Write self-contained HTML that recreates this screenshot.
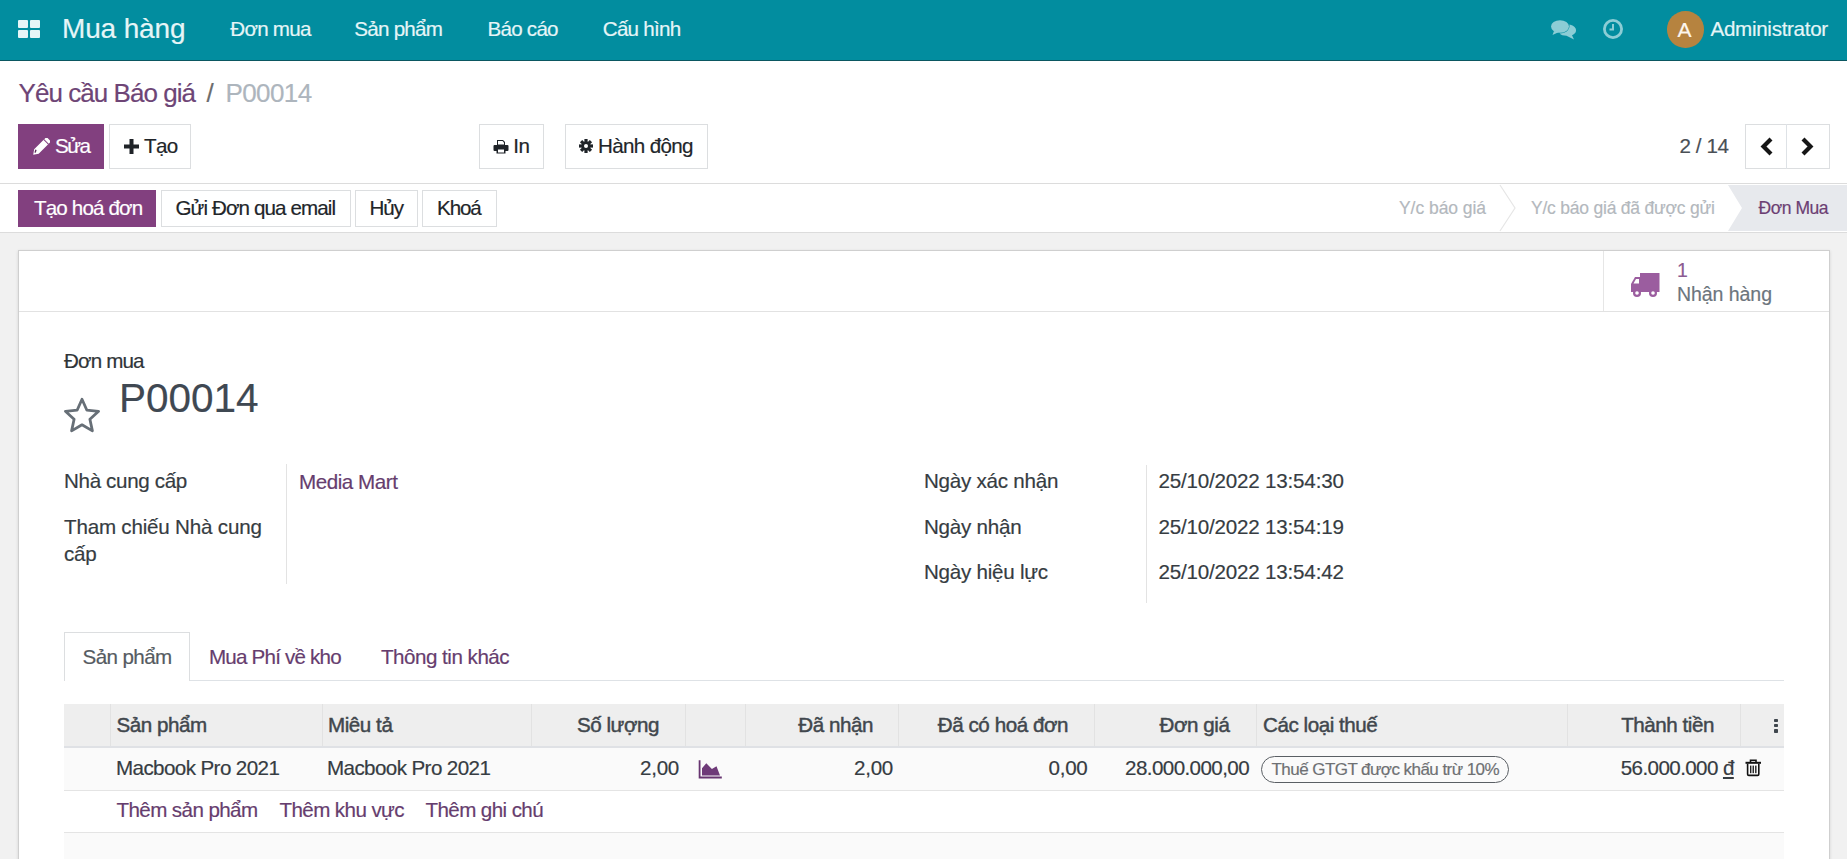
<!DOCTYPE html><html><head><meta charset="utf-8"><style>
html,body{margin:0;padding:0;}
body{width:1847px;height:859px;overflow:hidden;position:relative;background:#f1f1f1;font-family:"Liberation Sans",sans-serif;}
.t{position:absolute;white-space:nowrap;-webkit-text-stroke:0.18px currentColor;}
.r{position:absolute;box-sizing:border-box;}
svg{position:absolute;}
</style></head><body>
<div class="r" style="left:0px;top:233px;width:1847px;height:626px;background:#f1f1f1;"></div>
<div class="r" style="left:0px;top:0px;width:1847px;height:61px;background:#028d9f;"></div>
<div class="r" style="left:0px;top:60px;width:1847px;height:1px;background:#0b5761;"></div>
<div class="r" style="left:18px;top:19.5px;width:10px;height:8.4px;background:#e6f5f7;border-radius:1px"></div>
<div class="r" style="left:30px;top:19.5px;width:10px;height:8.4px;background:#e6f5f7;border-radius:1px"></div>
<div class="r" style="left:18px;top:29.8px;width:10px;height:8.4px;background:#e6f5f7;border-radius:1px"></div>
<div class="r" style="left:30px;top:29.8px;width:10px;height:8.4px;background:#e6f5f7;border-radius:1px"></div>
<div class="t" style="top:15.30px;font-size:28px;line-height:28px;color:#e6f5f7;letter-spacing:-0.15px;left:62.00px;">Mua hàng</div>
<div class="t" style="top:19.01px;font-size:20.6px;line-height:20.6px;color:#e6f5f7;letter-spacing:-0.7500000000000002px;left:230.30px;">Đơn mua</div>
<div class="t" style="top:19.01px;font-size:20.6px;line-height:20.6px;color:#e6f5f7;letter-spacing:-0.7500000000000002px;left:354.30px;">Sản phẩm</div>
<div class="t" style="top:19.01px;font-size:20.6px;line-height:20.6px;color:#e6f5f7;letter-spacing:-0.7500000000000002px;left:487.50px;">Báo cáo</div>
<div class="t" style="top:19.01px;font-size:20.6px;line-height:20.6px;color:#e6f5f7;letter-spacing:-0.7500000000000002px;left:602.80px;">Cấu hình</div>
<svg style="left:1551px;top:19px" width="26" height="22" viewBox="0 0 26 22">
<ellipse cx="9" cy="7.5" rx="9" ry="6.3" fill="#8ccdd5"/>
<path d="M3 12 L1.5 16 L8 13 Z" fill="#8ccdd5"/>
<path d="M18.5 5.5 C23 6.5 25.5 9 25 12 C24.7 14 23 15.5 21 16.3 L23 20.5 L15.5 16.8 C12.5 16.8 10 15.8 8.6 14.5 C14 14.5 18.5 11.5 18.5 7 Z" fill="#8ccdd5"/>
</svg>
<svg style="left:1602px;top:18px" width="22" height="22" viewBox="0 0 22 22">
<circle cx="11" cy="11" r="8.6" fill="none" stroke="#8ccdd5" stroke-width="2.8"/>
<path d="M11 6 V11.5 H7.5" fill="none" stroke="#8ccdd5" stroke-width="2"/>
</svg>
<div class="r" style="left:1667px;top:11px;width:36.5px;height:36.5px;border-radius:50%;background:#b6833f"></div>
<div class="t" style="top:18.72px;font-size:21px;line-height:21px;color:#fdf6ee;letter-spacing:-0.5px;left:1677.50px;">A</div>
<div class="t" style="top:19.01px;font-size:20.6px;line-height:20.6px;color:#e6f5f7;letter-spacing:-0.30000000000000027px;left:1710.50px;">Administrator</div>
<div class="r" style="left:0px;top:61px;width:1847px;height:122px;background:#ffffff;"></div>
<div class="r" style="left:0px;top:183px;width:1847px;height:1px;background:#dcdcdc;"></div>
<div class="t" style="top:80.19px;font-size:26px;line-height:26px;color:#6e4576;letter-spacing:-0.95px;left:18.50px;">Yêu cầu Báo giá</div>
<div class="t" style="top:80.19px;font-size:26px;line-height:26px;color:#6c6c6c;left:206.50px;">/</div>
<div class="t" style="top:80.19px;font-size:26px;line-height:26px;color:#adb5bd;letter-spacing:-0.6px;left:225.50px;">P00014</div>
<div class="r" style="left:18px;top:124px;width:86px;height:45px;background:#82407f;"></div>
<div class="t" style="top:136.41px;font-size:20.6px;line-height:20.6px;color:#ffffff;letter-spacing:-1.5000000000000002px;left:55.00px;">Sửa</div>
<svg style="left:32px;top:138px" width="18" height="18" viewBox="0 0 18 18">
<g transform="translate(9 9) rotate(45)">
<path d="M-3.2 -9.5 Q-3.2 -11 -1.7 -11 H1.7 Q3.2 -11 3.2 -9.5 V6.5 L0 11 L-3.2 6.5 Z" fill="#ffffff"/>
<rect x="-3.5" y="-7.8" width="7" height="1" fill="#82407f"/>
<path d="M-1.6 5.5 L-0.2 8.2" stroke="#5a2c58" stroke-width="1.4"/>
</g>
</svg>
<div class="r" style="left:109px;top:124px;width:82px;height:45px;background:#fff;border:1px solid #dcdee0"></div>
<svg style="left:123px;top:138px" width="17" height="17" viewBox="0 0 17 17">
<path d="M6.5 1 H10.5 V6.5 H16 V10.5 H10.5 V16 H6.5 V10.5 H1 V6.5 H6.5 Z" fill="#1f2328"/>
</svg>
<div class="t" style="top:136.41px;font-size:20.6px;line-height:20.6px;color:#212529;letter-spacing:-0.7000000000000003px;left:144.00px;">Tạo</div>
<div class="r" style="left:479px;top:124px;width:65px;height:45px;background:#fff;border:1px solid #dcdee0"></div>
<svg style="left:493px;top:139px" width="16" height="15" viewBox="0 0 16 15">
<path d="M4 1 H10 L12 3 V6 H4 Z" fill="#1f2328"/>
<path d="M5 2 H9.5 L11 3.5 V5.5 H5 Z" fill="#fff"/>
<rect x="0.5" y="6" width="15" height="6" rx="1" fill="#1f2328"/>
<rect x="3.5" y="9.5" width="9" height="5" fill="#1f2328"/>
<rect x="5" y="10.5" width="6" height="3" fill="#fff"/>
</svg>
<div class="t" style="top:136.41px;font-size:20.6px;line-height:20.6px;color:#212529;letter-spacing:-0.30000000000000027px;left:513.20px;">In</div>
<div class="r" style="left:565px;top:124px;width:143px;height:45px;background:#fff;border:1px solid #dcdee0"></div>
<svg style="left:579px;top:139px" width="14" height="14" viewBox="0 0 14 14">
<g fill="#1f2328" transform="translate(7 7)">
<circle r="4.6"/>
<rect x="-1.6" y="-7" width="3.2" height="14"/>
<rect x="-1.6" y="-7" width="3.2" height="14" transform="rotate(45)"/>
<rect x="-1.6" y="-7" width="3.2" height="14" transform="rotate(90)"/>
<rect x="-1.6" y="-7" width="3.2" height="14" transform="rotate(135)"/>
</g><circle cx="7" cy="7" r="2" fill="#fff"/>
</svg>
<div class="t" style="top:136.41px;font-size:20.6px;line-height:20.6px;color:#212529;letter-spacing:-0.6500000000000002px;left:598.00px;">Hành động</div>
<div class="t" style="top:136.01px;font-size:20.6px;line-height:20.6px;color:#4a4f55;letter-spacing:-0.40000000000000024px;left:1679.50px;">2 / 14</div>
<div class="r" style="left:1745px;top:124px;width:85px;height:45px;background:#fff;border:1px solid #dcdee0"></div>
<div class="r" style="left:1786px;top:124px;width:1px;height:45px;background:#dee2e6;"></div>
<svg style="left:1759px;top:136.8px" width="16" height="20" viewBox="0 0 16 20">
<path d="M12 2 L4.5 9.5 L12 17" fill="none" stroke="#161616" stroke-width="4.2"/>
</svg>
<svg style="left:1799px;top:136.8px" width="16" height="20" viewBox="0 0 16 20">
<path d="M4 2 L11.5 9.5 L4 17" fill="none" stroke="#161616" stroke-width="4.2"/>
</svg>
<div class="r" style="left:0px;top:184px;width:1847px;height:48px;background:#ffffff;"></div>
<div class="r" style="left:0px;top:232px;width:1847px;height:1px;background:#dcdcdc;"></div>
<div class="r" style="left:18px;top:190px;width:138px;height:37px;background:#82407f;"></div>
<div class="t" style="top:197.71px;font-size:20.6px;line-height:20.6px;color:#ffffff;letter-spacing:-0.8500000000000003px;left:34.00px;">Tạo hoá đơn</div>
<div class="r" style="left:161px;top:190px;width:190px;height:37px;background:#fff;border:1px solid #dcdee0"></div>
<div class="t" style="top:197.71px;font-size:20.6px;line-height:20.6px;color:#212529;letter-spacing:-0.9000000000000002px;left:175.50px;">Gửi Đơn qua email</div>
<div class="r" style="left:355px;top:190px;width:63px;height:37px;background:#fff;border:1px solid #dcdee0"></div>
<div class="t" style="top:197.71px;font-size:20.6px;line-height:20.6px;color:#212529;letter-spacing:-1.1000000000000003px;left:369.50px;">Hủy</div>
<div class="r" style="left:422px;top:190px;width:75px;height:37px;background:#fff;border:1px solid #dcdee0"></div>
<div class="t" style="top:197.71px;font-size:20.6px;line-height:20.6px;color:#212529;letter-spacing:-1.1000000000000003px;left:437.00px;">Khoá</div>
<svg style="left:1400px;top:184px" width="447" height="48" viewBox="0 0 447 48">
<path d="M100 1 L115 24 L100 47" fill="none" stroke="#e6e6e6" stroke-width="1.2"/>
<path d="M328 1 L447 1 L447 47 L328 47 L342 24 Z" fill="#e7e9ed"/>
</svg>
<div class="t" style="top:199.59px;font-size:17.5px;line-height:17.5px;color:#b3b8bd;letter-spacing:-0.05px;left:1399.00px;">Y/c báo giá</div>
<div class="t" style="top:199.59px;font-size:17.5px;line-height:17.5px;color:#b3b8bd;letter-spacing:-0.22px;left:1531.00px;">Y/c báo giá đã được gửi</div>
<div class="t" style="top:199.59px;font-size:17.5px;line-height:17.5px;color:#6c3f73;letter-spacing:-0.45px;left:1758.50px;">Đơn Mua</div>
<div class="r" style="left:18px;top:250px;width:1812px;height:650px;background:#ffffff;border:1px solid #cfcfcf;box-shadow:0 1px 3px rgba(0,0,0,0.12)"></div>
<div class="r" style="left:19px;top:311px;width:1810px;height:1px;background:#e2e2e2;"></div>
<div class="r" style="left:1603px;top:251px;width:1px;height:60px;background:#e6e6e6;"></div>
<svg style="left:1630px;top:272px" width="31" height="26" viewBox="0 0 31 26">
<path d="M10 1 H29.5 V20 H10 Z" fill="#9b5d9f"/>
<path d="M1 20 V12 L5 5 H11 V20 Z" fill="#9b5d9f"/>
<path d="M3.5 11.5 L6 7 H9 V11.5 Z" fill="#fff"/>
<circle cx="7" cy="21" r="4" fill="#9b5d9f"/><circle cx="7" cy="21" r="1.8" fill="#fff"/>
<circle cx="23" cy="21" r="4" fill="#9b5d9f"/><circle cx="23" cy="21" r="1.8" fill="#fff"/>
</svg>
<div class="t" style="top:260.79px;font-size:19.5px;line-height:19.5px;color:#8b5a91;left:1677.00px;">1</div>
<div class="t" style="top:284.89px;font-size:19.5px;line-height:19.5px;color:#6c757d;letter-spacing:-0.05px;left:1677.00px;">Nhận hàng</div>
<div class="t" style="top:350.61px;font-size:20.6px;line-height:20.6px;color:#2f3438;letter-spacing:-0.8500000000000003px;left:64.00px;">Đơn mua</div>
<svg style="left:62px;top:396.5px" width="40" height="40" viewBox="0 0 40 40">
<path d="M20 2.3 L24.9 13.2 L36.6 14.3 L27.9 22.2 L30.4 33.9 L20 27.8 L9.6 33.9 L12.1 22.2 L3.4 14.3 L15.1 13.2 Z" fill="none" stroke="#676f77" stroke-width="2.8" stroke-linejoin="round"/>
</svg>
<div class="t" style="top:377.72px;font-size:40.5px;line-height:40.5px;color:#3f4852;left:119.00px;">P00014</div>
<div class="t" style="top:470.51px;font-size:20.6px;line-height:20.6px;color:#363c42;letter-spacing:-0.35000000000000026px;left:64.00px;">Nhà cung cấp</div>
<div class="t" style="top:517.31px;font-size:20.6px;line-height:20.6px;color:#363c42;letter-spacing:-0.20000000000000026px;left:64.00px;">Tham chiếu Nhà cung</div>
<div class="t" style="top:544.01px;font-size:20.6px;line-height:20.6px;color:#363c42;letter-spacing:-0.30000000000000027px;left:64.00px;">cấp</div>
<div class="r" style="left:286px;top:464px;width:1px;height:120px;background:#e3e3e3;"></div>
<div class="t" style="top:471.81px;font-size:20.6px;line-height:20.6px;color:#663d6e;letter-spacing:-0.4500000000000003px;left:299.00px;">Media Mart</div>
<div class="t" style="top:470.91px;font-size:20.6px;line-height:20.6px;color:#363c42;letter-spacing:-0.2500000000000003px;left:924.00px;">Ngày xác nhận</div>
<div class="t" style="top:516.71px;font-size:20.6px;line-height:20.6px;color:#363c42;letter-spacing:-0.2500000000000003px;left:924.00px;">Ngày nhận</div>
<div class="t" style="top:562.41px;font-size:20.6px;line-height:20.6px;color:#363c42;letter-spacing:-0.2500000000000003px;left:924.00px;">Ngày hiệu lực</div>
<div class="r" style="left:1146px;top:465px;width:1px;height:138px;background:#e3e3e3;"></div>
<div class="t" style="top:470.91px;font-size:20.6px;line-height:20.6px;color:#363c42;letter-spacing:-0.20000000000000026px;left:1158.50px;">25/10/2022 13:54:30</div>
<div class="t" style="top:516.71px;font-size:20.6px;line-height:20.6px;color:#363c42;letter-spacing:-0.20000000000000026px;left:1158.50px;">25/10/2022 13:54:19</div>
<div class="t" style="top:562.41px;font-size:20.6px;line-height:20.6px;color:#363c42;letter-spacing:-0.20000000000000026px;left:1158.50px;">25/10/2022 13:54:42</div>
<div class="r" style="left:64px;top:680px;width:1720px;height:1px;background:#dee2e6;"></div>
<div class="r" style="left:64px;top:632px;width:126px;height:49px;background:#ffffff;border:1px solid #dcdee0;border-bottom:none"></div>
<div class="t" style="top:646.81px;font-size:20.6px;line-height:20.6px;color:#555b61;letter-spacing:-0.6000000000000003px;left:82.50px;">Sản phẩm</div>
<div class="t" style="top:646.81px;font-size:20.6px;line-height:20.6px;color:#663d6e;letter-spacing:-0.8000000000000003px;left:209.00px;">Mua Phí về kho</div>
<div class="t" style="top:646.81px;font-size:20.6px;line-height:20.6px;color:#663d6e;letter-spacing:-0.5000000000000002px;left:381.00px;">Thông tin khác</div>
<div class="r" style="left:64px;top:704px;width:1720px;height:42px;background:#eeeeee;"></div>
<div class="r" style="left:64px;top:746px;width:1720px;height:2px;background:#dfe1e5;"></div>
<div class="r" style="left:110px;top:704px;width:1px;height:42px;background:#e2e2e2;"></div>
<div class="r" style="left:322px;top:704px;width:1px;height:42px;background:#e2e2e2;"></div>
<div class="r" style="left:531px;top:704px;width:1px;height:42px;background:#e2e2e2;"></div>
<div class="r" style="left:685px;top:704px;width:1px;height:42px;background:#e2e2e2;"></div>
<div class="r" style="left:745px;top:704px;width:1px;height:42px;background:#e2e2e2;"></div>
<div class="r" style="left:898px;top:704px;width:1px;height:42px;background:#e2e2e2;"></div>
<div class="r" style="left:1094px;top:704px;width:1px;height:42px;background:#e2e2e2;"></div>
<div class="r" style="left:1256px;top:704px;width:1px;height:42px;background:#e2e2e2;"></div>
<div class="r" style="left:1567px;top:704px;width:1px;height:42px;background:#e2e2e2;"></div>
<div class="r" style="left:1740px;top:704px;width:1px;height:42px;background:#e2e2e2;"></div>
<div class="t" style="top:714.51px;font-size:20.6px;line-height:20.6px;color:#41474d;letter-spacing:-0.4500000000000003px;left:116.50px;-webkit-text-stroke:0.45px #41474d;">Sản phẩm</div>
<div class="t" style="top:714.51px;font-size:20.6px;line-height:20.6px;color:#41474d;letter-spacing:-0.4500000000000003px;left:328.00px;-webkit-text-stroke:0.45px #41474d;">Miêu tả</div>
<div class="t" style="top:714.51px;font-size:20.6px;line-height:20.6px;color:#41474d;letter-spacing:-0.4500000000000003px;right:1188.00px;-webkit-text-stroke:0.45px #41474d;">Số lượng</div>
<div class="t" style="top:714.51px;font-size:20.6px;line-height:20.6px;color:#41474d;letter-spacing:-0.4500000000000003px;right:974.00px;-webkit-text-stroke:0.45px #41474d;">Đã nhận</div>
<div class="t" style="top:714.51px;font-size:20.6px;line-height:20.6px;color:#41474d;letter-spacing:-0.4500000000000003px;right:779.00px;-webkit-text-stroke:0.45px #41474d;">Đã có hoá đơn</div>
<div class="t" style="top:714.51px;font-size:20.6px;line-height:20.6px;color:#41474d;letter-spacing:-0.4500000000000003px;right:617.50px;-webkit-text-stroke:0.45px #41474d;">Đơn giá</div>
<div class="t" style="top:714.51px;font-size:20.6px;line-height:20.6px;color:#41474d;letter-spacing:-0.4500000000000003px;left:1263.00px;-webkit-text-stroke:0.45px #41474d;">Các loại thuế</div>
<div class="t" style="top:714.51px;font-size:20.6px;line-height:20.6px;color:#41474d;letter-spacing:-0.4500000000000003px;right:133.00px;-webkit-text-stroke:0.45px #41474d;">Thành tiền</div>
<div class="r" style="left:1773.5px;top:718.5px;width:4.5px;height:3.6000000000000227px;background:#3f464d;border-radius:0.8px"></div>
<div class="r" style="left:1773.5px;top:723.8px;width:4.5px;height:3.6000000000000227px;background:#3f464d;border-radius:0.8px"></div>
<div class="r" style="left:1773.5px;top:729px;width:4.5px;height:3.6000000000000227px;background:#3f464d;border-radius:0.8px"></div>
<div class="r" style="left:64px;top:748px;width:1720px;height:42px;background:#fafafa;"></div>
<div class="r" style="left:64px;top:790px;width:1720px;height:1px;background:#e4e4e4;"></div>
<div class="t" style="top:758.01px;font-size:20.6px;line-height:20.6px;color:#363c42;letter-spacing:-0.6000000000000003px;left:116.00px;">Macbook Pro 2021</div>
<div class="t" style="top:758.01px;font-size:20.6px;line-height:20.6px;color:#363c42;letter-spacing:-0.6000000000000003px;left:327.00px;">Macbook Pro 2021</div>
<div class="t" style="top:758.01px;font-size:20.6px;line-height:20.6px;color:#363c42;letter-spacing:-0.30000000000000027px;right:1168.00px;">2,00</div>
<svg style="left:690px;top:750px" width="40" height="40" viewBox="0 0 40 40">
<path d="M9.6 10.2 V27.5 H31.8" fill="none" stroke="#673470" stroke-width="1.8"/>
<path d="M12 25.6 V18.2 L16.3 13.2 L21.9 19 L26.5 16.2 L30 25.6 Z" fill="#6e3a78"/>
</svg>
<div class="t" style="top:758.01px;font-size:20.6px;line-height:20.6px;color:#363c42;letter-spacing:-0.30000000000000027px;right:954.00px;">2,00</div>
<div class="t" style="top:758.01px;font-size:20.6px;line-height:20.6px;color:#363c42;letter-spacing:-0.30000000000000027px;right:759.50px;">0,00</div>
<div class="t" style="top:758.01px;font-size:20.6px;line-height:20.6px;color:#363c42;letter-spacing:-0.6000000000000003px;right:598.00px;">28.000.000,00</div>
<div class="r" style="left:1261px;top:756px;width:248px;height:27px;background:transparent;border:1.4px solid #5a5f64;border-radius:14px"></div>
<div class="t" style="top:761.01px;font-size:17px;line-height:17px;color:#6e7073;letter-spacing:-0.55px;left:1271.50px;">Thuế GTGT được khấu trừ 10%</div>
<div class="t" style="top:758.01px;font-size:20.6px;line-height:20.6px;color:#363c42;letter-spacing:-0.6000000000000003px;right:113.20px;">56.000.000 <u style="text-underline-offset:2px">đ</u></div>
<svg style="left:1745px;top:759px" width="17" height="19" viewBox="0 0 17 19">
<path d="M5.5 3 V1.2 H11 V3" fill="none" stroke="#111" stroke-width="1.6"/>
<rect x="0.5" y="2.8" width="15.5" height="2" fill="#111"/>
<path d="M2.6 4.8 V15.2 Q2.6 16.4 3.8 16.4 H12.6 Q13.8 16.4 13.8 15.2 V4.8" fill="none" stroke="#111" stroke-width="1.6"/>
<rect x="5" y="6.6" width="1.4" height="7.6" fill="#222"/><rect x="7.55" y="6.6" width="1.4" height="7.6" fill="#222"/><rect x="10.1" y="6.6" width="1.4" height="7.6" fill="#222"/>
</svg>
<div class="r" style="left:64px;top:791px;width:1720px;height:41px;background:#ffffff;"></div>
<div class="r" style="left:64px;top:832px;width:1720px;height:1px;background:#e4e4e4;"></div>
<div class="t" style="top:800.21px;font-size:20.6px;line-height:20.6px;color:#663d6e;letter-spacing:-0.6000000000000003px;left:116.50px;">Thêm sản phẩm</div>
<div class="t" style="top:800.21px;font-size:20.6px;line-height:20.6px;color:#663d6e;letter-spacing:-0.6000000000000003px;left:279.50px;">Thêm khu vực</div>
<div class="t" style="top:800.21px;font-size:20.6px;line-height:20.6px;color:#663d6e;letter-spacing:-0.6000000000000003px;left:425.50px;">Thêm ghi chú</div>
<div class="r" style="left:64px;top:833px;width:1720px;height:26px;background:#fafafa;"></div>
</body></html>
